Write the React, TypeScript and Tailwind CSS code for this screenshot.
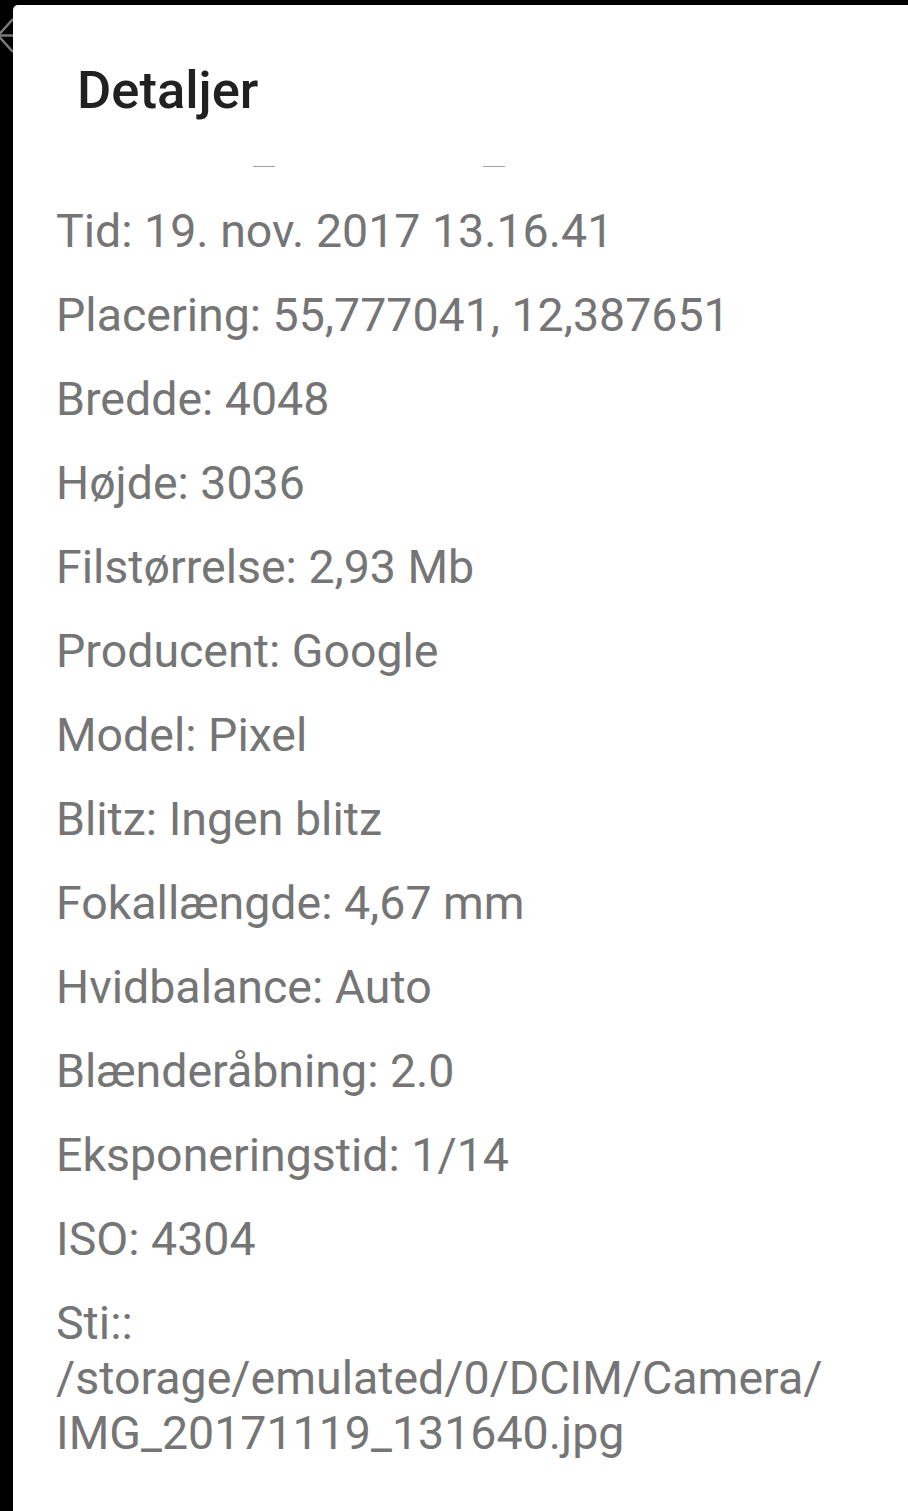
const rows = [
  "Tid: 19. nov. 2017 13.16.41",
  "Placering: 55,777041, 12,387651",
  "Bredde: 4048",
  "Højde: 3036",
  "Filstørrelse: 2,93 Mb",
  "Producent: Google",
  "Model: Pixel",
  "Blitz: Ingen blitz",
  "Fokallængde: 4,67 mm",
  "Hvidbalance: Auto",
  "Blænderåbning: 2.0",
  "Eksponeringstid: 1/14",
  "ISO: 4304",
];

const App = () => {
  return (
    <div
      className="relative flex h-[1511px] w-full overflow-hidden bg-black pl-[13px] pt-[5px]"
      style={{ fontFamily: "Roboto, 'Noto Sans', sans-serif" }}
    >
      {/* back arrow peeking out behind the dialog */}
      <svg
        className="absolute left-0 top-0"
        width="13"
        height="60"
        viewBox="0 0 13 60"
        fill="none"
        stroke="#7a7a7a"
        strokeWidth="2.5"
      >
        <path d="M13 19 L-2 35.5 L13 52" />
        <path d="M-2 35.5 H13" />
      </svg>

      <div className="flex flex-1 flex-col rounded-tl-[5px] bg-white">
        <h1 className="mt-[55px] pl-[64px] text-[52.5px] font-medium leading-[60px] text-[#212121]">
          Detaljer
        </h1>

        <div className="mt-[46px] flex h-px">
          <div className="ml-[240px] w-[22px] bg-[#a0a0a0]" />
          <div className="ml-[208px] w-[22px] bg-[#a0a0a0]" />
        </div>

        <div className="mt-[37px] flex flex-col gap-[29px] pl-[43px] text-[46.5px] leading-[55px] text-[#757575]">
          {rows.map((row) => (
            <div key={row}>{row}</div>
          ))}
          <div>
            Sti::
            <br />
            /storage/emulated/0/DCIM/Camera/
            <br />
            IMG_20171119_131640.jpg
          </div>
        </div>
      </div>
    </div>
  );
};

export default App;
